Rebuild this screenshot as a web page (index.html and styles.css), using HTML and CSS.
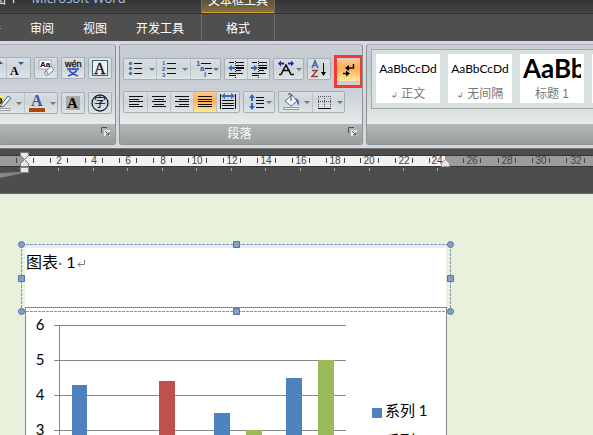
FILE: index.html
```html
<!DOCTYPE html>
<html lang="zh-CN">
<head>
<meta charset="utf-8">
<title>图 1 - Microsoft Word</title>
<link rel="stylesheet" href="styles.css">
</head>
<body>
<div class="app">
  <header class="titlebar">
    <div class="doc-title"><span class="doc-name">图 1</span><span class="app-name">Microsoft Word</span></div>
    <div class="context-title">文本框工具</div>
  </header>
  <nav class="tabs">
    <a href="#" class="tab">邮件</a>
    <a href="#" class="tab">审阅</a>
    <a href="#" class="tab">视图</a>
    <a href="#" class="tab">开发工具</a>
    <a href="#" class="tab context">格式</a>
  </nav>

  <section class="ribbon">
    <div class="group font-group">
      <div class="rows">
        <div class="row">
          <div class="seg">
            <button class="btn" aria-label="增大字体"><svg width="20" height="20"><text x="1" y="16" class="serif b" font-size="14">A</text><path d="M12 6l3-3 3 3z" fill="#2f5597"/></svg></button>
            <button class="btn wide" aria-label="缩小字体"><svg width="20" height="20"><text x="1" y="17" class="serif b" font-size="12">A</text><path d="M9 4h6l-3 3z" fill="#2f5597"/></svg></button>
          </div>
          <div class="seg"><button class="btn" aria-label="清除格式"><svg width="20" height="20"><rect x="3" y="2" width="12" height="9" fill="#fff" stroke="#9aa8bd"/><text x="4" y="9" class="sans b" font-size="8">Aa</text><path d="M9 14l5-5q2-1 3 1t0 3l-5 4q-2 1-3-1z" fill="#edf2fa" stroke="#7289b2"/><path d="M9 13q2-1 3 3" fill="none" stroke="#7289b2"/></svg></button></div>
          <div class="seg"><button class="btn" aria-label="拼音指南"><svg width="20" height="20"><text x="2" y="9" class="sans" font-size="9" stroke="#222" stroke-width=".3">wén</text><path d="M4 11h12M10 10v2M6 12q3 4 9 6M14 12q-3 4-9 6" fill="none" stroke="#2b4cba" stroke-width="1.500"/></svg></button></div>
          <div class="seg"><button class="btn" aria-label="字符边框"><svg width="20" height="20"><rect x="2.500" y="2.500" width="15" height="15" fill="#edf1f3" stroke="#44607f"/><text x="4" y="16" class="serif" font-size="16" stroke="#222" stroke-width=".4">A</text></svg></button></div>
        </div>
        <div class="row lower">
          <div class="seg">
            <button class="btn split" aria-label="突出显示"><svg width="20" height="20"><path d="M0 3h11v9H0z" fill="#ffed54"/><text x="3" y="11" class="serif b" font-size="12">b</text><path d="M8 12l7-9 3 2-7 8-4 1z" fill="#edf3fb" stroke="#42659c"/><path d="M3 15.500h14v2H3z" fill="#fff" stroke="#999"/></svg><i class="caret"></i></button>
            <button class="btn split" aria-label="字体颜色"><svg width="20" height="20"><text x="4" y="13" class="serif b" font-size="16" fill="#315ba0">A</text><path d="M2 15h16v4H2z" fill="#ad4908"/></svg><i class="caret"></i></button>
          </div>
          <div class="seg"><button class="btn" aria-label="字符底纹"><svg width="20" height="20"><path d="M3 3h14v14H3z" fill="#aaa"/><text x="4" y="15" class="serif b" font-size="15">A</text></svg></button></div>
          <div class="seg"><button class="btn" aria-label="带圈字符"><svg width="20" height="20"><circle cx="10" cy="10" r="8" fill="none" stroke="#222" stroke-width="1.300"/><text x="4" y="14" class="cjk" font-size="12">字</text></svg></button></div>
        </div>
      </div>
      <footer class="group-label"><span></span><svg class="launcher" width="9" height="9"><path d="M.5 6V.5H6" fill="none" stroke="#4f5354"/><path d="M3 3h6v6H3z" fill="#e9eded"/><path d="M4 4l4 4M8 5v3H5" fill="none" stroke="#45494a"/></svg></footer>
    </div>

    <div class="group para-group">
      <div class="rows">
        <div class="row">
          <div class="seg">
            <button class="btn w32" aria-label="项目符号"><svg width="20" height="20"><path d="M8 4.500h8M8 9.500h8M8 14.500h8" stroke="#111"/><g fill="#4774bc"><circle cx="4.500" cy="4.500" r="1.700"/><circle cx="4.500" cy="9.500" r="1.700"/><circle cx="4.500" cy="14.500" r="1.700"/></g></svg><i class="caret"></i></button>
            <button class="btn w34" aria-label="编号"><svg width="20" height="20"><path d="M8 4.500h9M8 9.500h9M8 14.500h9" stroke="#111"/><g class="sans b" font-size="6" fill="#315eb0"><text x="3" y="6">1</text><text x="3" y="12">2</text><text x="3" y="18">3</text></g></svg><i class="caret"></i></button>
            <button class="btn w30" aria-label="多级列表"><svg width="20" height="20"><path d="M8 4.500h10M12 9.500h7M15 14.500h4" stroke="#111"/><g class="sans b" font-size="8" fill="#315eb0"><text x="3" y="7">1</text><text x="7" y="12">a</text><text x="11" y="18">i</text></g></svg><i class="caret near"></i></button>
          </div>
          <div class="seg">
            <button class="btn w22" aria-label="减少缩进"><svg width="20" height="20"><path d="M3 3.500h5M10 3.500h8M10 6.500h8M10 11.500h5M3 14.500h14M3 16.500h6" stroke="#111"/><path d="M10 8h8v2h-8z"/><path d="M9.500 2v17" stroke="#222" stroke-dasharray="1 1"/><path d="M2 9l4-3v2h3v2H6v2z" fill="#3466bc"/></svg></button>
            <button class="btn w22" aria-label="增加缩进"><svg width="20" height="20"><path d="M3 3.500h5M10 3.500h8M10 6.500h8M10 11.500h5M3 14.500h14M3 16.500h6" stroke="#111"/><path d="M10 8h8v2h-8z"/><path d="M9.500 2v17" stroke="#222" stroke-dasharray="1 1"/><path d="M9 9L5 6v2H2v2h3v2z" fill="#3466bc"/></svg></button>
          </div>
          <div class="seg"><button class="btn w29" aria-label="中文版式"><svg width="20" height="20"><path d="M3 15.500h2L10 6l5 9.500h3M6 11.500h8" fill="none" stroke="#111" stroke-width="1.600"/><path d="M2 4.500l3-3v2h3v2H5v2zM18 4.500l-3-3v2h-3v2h3v2z" fill="#1b2ba0"/></svg><i class="caret near"></i></button></div>
          <div class="seg"><button class="btn w22" aria-label="排序"><svg width="20" height="20"><path d="M3 9l3-7 3 7M4 6.500h4" fill="none" stroke="#3869b6" stroke-width="1.500"/><path d="M3 11.500h5L3 17.500h6" fill="none" stroke="#a43c40" stroke-width="1.500"/><path d="M14.500 4v10" stroke="#111"/><path d="M12 13h5l-2.500 4z"/></svg></button></div>
          <div class="highlight-mark"><button class="btn active" aria-label="显示/隐藏编辑标记" aria-pressed="true"><svg width="20" height="20"><path d="M14.500 4v4H9M4 13.500h4" fill="none" stroke="#111" stroke-width="1.500"/><path d="M6 8l4-3v6zM11 13.500l-4-3v6z"/></svg></button></div>
        </div>
        <div class="row lower">
          <div class="seg">
            <button class="btn w23" aria-label="左对齐"><svg width="20" height="20"><path d="M3 4.500h14M3 7.500h10M3 9.500h14M3 12.500h10M3 14.500h14" stroke="#111"/></svg></button>
            <button class="btn w23" aria-label="居中"><svg width="20" height="20"><path d="M3 4.500h14M5 7.500h10M3 9.500h14M5 12.500h10M3 14.500h14" stroke="#111"/></svg></button>
            <button class="btn w23" aria-label="右对齐"><svg width="20" height="20"><path d="M3 4.500h14M7 7.500h10M3 9.500h14M7 12.500h10M3 14.500h14" stroke="#111"/></svg></button>
            <button class="btn w23 active" aria-label="两端对齐" aria-pressed="true"><svg width="20" height="20"><path d="M3 4.500h14M3 7.500h14M3 9.500h14M3 12.500h14M3 14.500h14" stroke="#111"/></svg></button>
            <button class="btn w23" aria-label="分散对齐"><svg width="20" height="20"><path d="M2.500 2v15M17.500 2v15M4 8.500h12M4 11.500h12M4 13.500h12M4 16.500h12" stroke="#111"/><path d="M3 4l4-3v2h6V1l4 3-4 3V5H7v2z" fill="#396dbf"/></svg></button>
          </div>
          <div class="seg"><button class="btn w30" aria-label="行距"><svg width="20" height="20"><path d="M10 5.500h8M10 8.500h8M10 11.500h8M10 15.500h8" stroke="#111"/><path d="M3 6l3-4 3 4H7v3H5V6zM3 14l3 4 3-4H7v-3H5v3z" fill="#3466bc"/></svg><i class="caret near"></i></button></div>
          <div class="seg">
            <button class="btn w33" aria-label="底纹"><svg width="20" height="20"><path d="M4 9l7-6 5 6-6 5z" fill="#f5f7f9" stroke="#577091"/><path d="M10 9V2q-2-2-3 1" fill="none" stroke="#444"/><path d="M14 6q5 1 4 7-2 0-2-4z" fill="#3b6dbb"/><path d="M2.500 15.500h15v2h-15z" fill="#eee" stroke="#999"/></svg><i class="caret"></i></button>
            <button class="btn w32" aria-label="边框"><svg width="20" height="20"><path d="M4.500 4v12M10.500 4v12M16.500 4v12M4 4.500h13M4 9.500h13" stroke="#555" stroke-dasharray="1 1"/><path d="M4 16.500h13" stroke="#111"/></svg><i class="caret"></i></button>
          </div>
        </div>
      </div>
      <footer class="group-label"><span>段落</span><svg class="launcher" width="9" height="9"><path d="M.5 6V.5H6" fill="none" stroke="#4f5354"/><path d="M3 3h6v6H3z" fill="#e9eded"/><path d="M4 4l4 4M8 5v3H5" fill="none" stroke="#45494a"/></svg></footer>
    </div>

    <div class="group style-group">
      <div class="gallery">
        <button class="style"><span class="sample">AaBbCcDd</span><span class="style-name"><small>↲</small> 正文</span></button>
        <button class="style"><span class="sample">AaBbCcDd</span><span class="style-name"><small>↲</small> 无间隔</span></button>
        <button class="style"><span class="sample big">AaBb</span><span class="style-name">标题 1</span></button>
        <button class="style" aria-label="标题 2"></button>
      </div>
      <footer class="group-label"></footer>
    </div>
  </section>

  <div class="ruler">
    <svg class="ruler-scale" height="44">
      <rect y="7" width="100%" height="10" fill="#9b9b9b"/>
      <rect x="24" y="7" width="421" height="10" fill="#f1f1f1"/>
      <path d="M0 6.500h3000M0 17.500h3000" stroke="#353535"/>
      <path d="M16.500 9v5M33.500 9v5M50.500 9v5M67.500 9v5M85.500 9v5M102.500 9v5M119.500 9v5M136.500 9v5M153.500 9v5M171.500 9v5M188.500 9v5M206.500 9v5M223.500 9v5M240.500 9v5M257.500 9v5M275.500 9v5M292.500 9v5M309.500 9v5M326.500 9v5M344.500 9v5M360.500 9v5M378.500 9v5M395.500 9v5M412.500 9v5M429.500 9v5M463.500 9v5M480.500 9v5M498.500 9v5M515.500 9v5M532.500 9v5M549.500 9v5M566.500 9v5M584.500 9v5" stroke="#444"/>
      <path d="M58.500 19v3M93.500 19v3M127.500 19v3M162.500 19v3M196.500 19v3M231.500 19v3M265.500 19v3M300.500 19v3M334.500 19v3M369.500 19v3M403.500 19v3M437.500 19v3" stroke="#aaa"/>
      <g class="numbers"><text x="59" y="15">2</text><text x="94" y="15">4</text><text x="128" y="15">6</text><text x="163" y="15">8</text><text x="197" y="15">10</text><text x="232" y="15">12</text><text x="266" y="15">14</text><text x="301" y="15">16</text><text x="335" y="15">18</text><text x="369" y="15">20</text><text x="404" y="15">22</text><text x="437" y="15">24</text><text x="472" y="15">26</text><text x="507" y="15">28</text><text x="541" y="15">30</text><text x="576" y="15">32</text></g>
      <path d="M0 24L21 23H28L0 29z" fill="#858585"/>
      <path d="M20.500 3.500h8v3l-4 4-4-4zM20.500 17.500v-3l4-4 4 4v3z" fill="#e8e8e8" stroke="#777"/>
      <path d="M20.500 18.500h8v5h-8z" fill="#e8e8e8" stroke="#888"/>
      <path d="M441.500 17.500v-3l4-4 4 4v3z" fill="#e8e8e8" stroke="#999"/>
    </svg>
  </div>

  <main class="canvas">
    <article class="page">
      <div class="textbox">
        <p class="caption">图表<span class="mark">·</span> 1<svg class="return" width="8" height="9"><path d="M7.500 1v4.500H1M3.500 3L1 5.500 3.500 8" fill="none" stroke="#777"/></svg></p>
        <svg class="selection" width="438" height="76">
          <path d="M5 4.500h429M5 71.500h429" stroke="#8297bd" stroke-dasharray="3 1"/>
          <path d="M4.500 5v66M433.500 5v66" stroke="#8297bd" stroke-dasharray="3 1"/>
          <g fill="#879fc3" stroke="#55749f"><circle cx="4.500" cy="4.500" r="3"/><circle cx="433.500" cy="4.500" r="3"/><circle cx="4.500" cy="71.500" r="3"/><circle cx="433.500" cy="71.500" r="3"/><path d="M216.500 1.500h6v6h-6zM216.500 68.500h6v6h-6zM1.500 35.500h6v6h-6zM430.500 35.500h6v6h-6z"/></g>
        </svg>
      </div>
      <svg class="chart" width="422" height="200" role="img" aria-label="系列图表">
        <rect x=".5" y=".5" width="421" height="220" fill="#fff" stroke="#868686"/>
        <path d="M29 18.500h292M29 53.500h292M29 88.500h292M29 123.500h292M34.500 18v182" stroke="#868686"/>
        <path d="M47 78h15v122H47zM189 106h16v94h-16zM261 71h16v129h-16z" fill="#4f81bd"/>
        <path d="M134 74h16v126h-16z" fill="#c0504d"/>
        <path d="M221 123h16v77h-16zM293 53h16v147h-16z" fill="#9bbb59"/>
        <g class="axis"><text x="15" y="23">6</text><text x="15" y="58">5</text><text x="15" y="93">4</text><text x="15" y="128">3</text></g>
        <path d="M347 101h10v10h-10z" fill="#4f81bd"/>
        <g class="legend"><text x="360" y="109">系列 1</text><text x="360" y="139">系列 2</text></g>
      </svg>
    </article>
  </main>
</div>
</body>
</html>
```
FILE: styles.css
```css
* { box-sizing: border-box; }
body {
  margin: 0;
  font: 12px/16px "Liberation Sans", "Noto Sans CJK SC", sans-serif;
  background: #e9f1dd;
}
button { font: inherit; border: 0; padding: 0; margin: 0; background: none; color: inherit; }
.app { display: flex; flex-direction: column; height: 100vh; overflow: hidden; }

.titlebar {
  display: flex;
  flex: none;
  height: 14px;
  overflow: hidden;
  background: linear-gradient(#353535, #454545);
  border-bottom: 1px solid #343434;
}
.doc-title {
  display: flex;
  gap: 15px;
  width: 201px;
  margin-left: -7px;
  margin-top: -12px;
  font: 13px/20px "Open Sans", "Noto Sans CJK SC", sans-serif;
  white-space: nowrap;
}
.doc-name { color: #eee; }
.app-name { color: #a3c4ee; }
.context-title {
  width: 74px;
  margin-left: 7px;
  height: 14px;
  line-height: 2px;
  text-align: center;
  color: #fff;
  background: linear-gradient(#57513c, #857141);
  border: 1px solid #6f6b60;
  border-top: 0;
  border-bottom: 2px solid #d8a52f;
}

.tabs { display: flex; flex: none; gap: 29px; height: 27px; padding-top: 7px; background: #4f4f4f; overflow: hidden; }
.tab { color: #fff; text-decoration: none; white-space: nowrap; }
.tab:first-child { margin-left: -23px; }
.context {
  width: 74px;
  margin: -7px 0 0 -12px;
  padding-top: 7px;
  text-align: center;
  border: 1px solid #6b7077;
  border-width: 0 1px;
}

.ribbon {
  display: flex;
  flex: none;
  gap: 3px;
  height: 108px;
  padding: 3px 0;
  background: #d5d8dc;
  border-bottom: 1px solid #777;
}
.group {
  display: flex;
  flex-direction: column;
  justify-content: space-between;
  flex: none;
  border: 1px solid #8e9295;
  border-top-color: #a9aeb4;
  border-radius: 3px;
  background: linear-gradient(#cbcfd6, #c3c8d0 20%, #cdd3d7 50%, #e5ecea 79%);
  overflow: hidden;
}
.font-group { width: 117px; margin-left: -1px; }
.para-group { width: 244px; }
.style-group { flex: 1; border-right: 0; border-radius: 3px 0 0 3px; }
.group-label {
  display: flex;
  align-items: center;
  height: 20px;
  padding: 0 5px;
  color: #fff;
  background: linear-gradient(#b4b9b8, #999e9d);
}
.group-label span { flex: 1; padding-left: 6px; text-align: center; }
.launcher { display: block; margin-bottom: 6px; }

.rows { padding-top: 13px; }
.row { display: flex; gap: 3px; }
.lower { margin-top: 11px; }
.font-group .rows { padding-top: 12px; }
.font-group .row { justify-content: flex-end; padding-right: 3px; }
.font-group .lower { margin-top: 13px; }
.para-group .row { padding-left: 3px; }
.seg {
  display: flex;
  flex: none;
  height: 22px;
  border: 1px solid #a5b0b5;
  border-radius: 2px;
  background: linear-gradient(#d9dfe2, #cfd6da 45%, #dee5e6);
}
.btn { display: flex; flex: none; align-items: center; justify-content: center; width: 22px; height: 20px; }
.btn + .btn { border-left: 1px solid #bac4c8; }
.btn svg { display: block; flex: none; }
.wide { width: 24px; }
.split { width: 33px; }
.w22 { width: 22px; }
.w23 { width: 23px; }
.w29 { width: 29px; }
.w30 { width: 30px; }
.w32 { width: 32px; }
.w33 { width: 33px; }
.w34 { width: 34px; }
.caret { flex: none; margin-left: 3px; border: 3px solid transparent; border-top-color: #777; border-bottom: 0; }
.near { margin-left: 0; }
.active { background: linear-gradient(#fbc992, #fbb04f 45%, #ffe99a); }
.highlight-mark { margin: -3px 0 -8px; width: 31px; height: 33px; border: 3px solid #fa3534; }
.highlight-mark .btn { height: 22px; width: 23px; margin-top: 1px; }

.serif { font-family: "Liberation Serif", serif; }
.sans { font-family: "Liberation Sans", sans-serif; }
.cjk { font-family: "Noto Sans CJK SC", sans-serif; }
.b { font-weight: bold; }

.gallery {
  display: flex;
  flex: none;
  gap: 8px;
  height: 60px;
  margin: 4px 0 0 4px;
  padding: 4px;
  background: #d8e1e0;
  border: 1px solid #a4a9ac;
  border-right: 0;
  overflow: hidden;
}
.style {
  display: flex;
  flex: none;
  flex-direction: column;
  width: 64px;
  height: 49px;
  padding: 0 3px;
  overflow: hidden;
  background: #fff;
}
.sample { width: 58px; height: 32px; font: 12px/30px Lato, sans-serif; color: #000; white-space: nowrap; overflow: hidden; }
.big { font-size: 26px; line-height: 28px; font-weight: 700; }
.style-name { width: 58px; text-align: center; color: #777; white-space: nowrap; }
.style-name small { font-size: 8px; line-height: 8px; }

.ruler { flex: none; height: 45px; background: #4d4d4d; border-bottom: 1px solid #6c6c66; }
.ruler-scale { display: block; width: 100%; }
.numbers { font: 10px "Liberation Sans", sans-serif; fill: #444; text-anchor: middle; }

.canvas { flex: 1; min-height: 0; padding: 54px 25px 0; overflow: hidden; }
.page { width: 422px; }
.textbox { position: relative; height: 59px; margin-right: 1px; background: #fff; }
.caption { margin: 0; padding: 2px 1px; font: 16px/24px Lato, "Noto Sans CJK SC", sans-serif; color: #000; }
.mark { color: #777; }
.return { margin-left: 1px; }
.selection { position: absolute; left: -8px; top: -8px; z-index: 1; }
.chart { display: block; }
.axis { font: 15px Lato, sans-serif; text-anchor: middle; }
.legend { font: 15px Lato, "Noto Sans CJK SC", sans-serif; }
```
